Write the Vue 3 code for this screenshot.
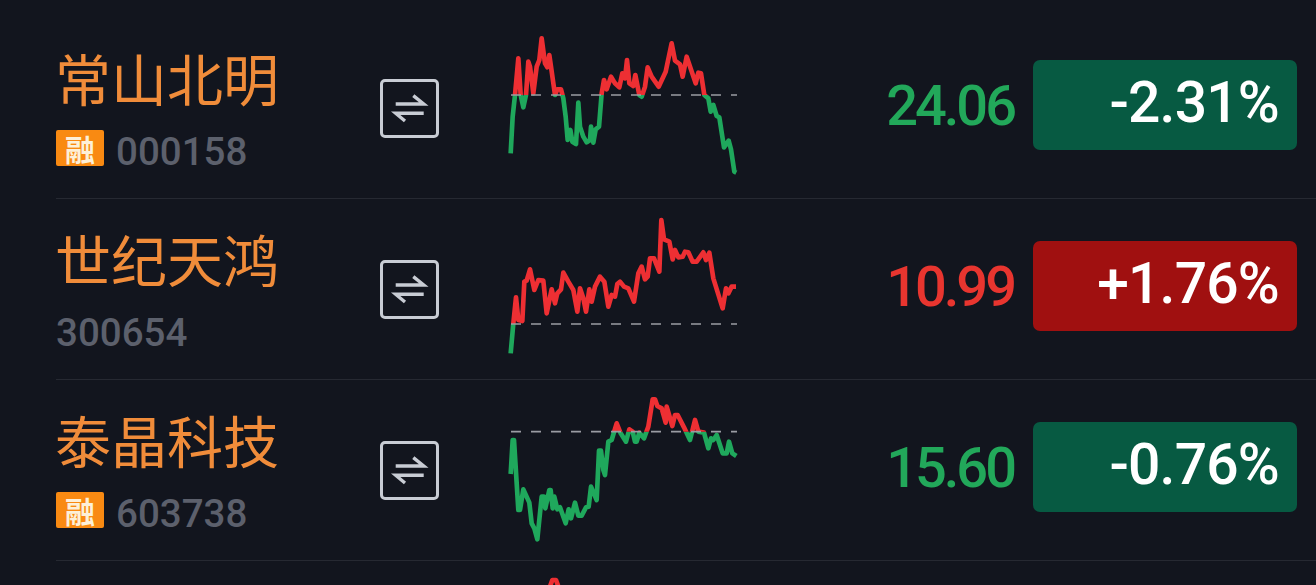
<script setup>
const rows = [
  {
    id: 'a', name: '常山北明', code: '000158', margin: true, price: '24.06', pct: '-2.31%', up: false,
    originY: -36, base: 195,
    pts: '32,370 38,260 45,195 55,85 62,195 70,232 78,195 85,95 90,110 100,190 110,110 118,90 125,25 135,100 142,112 148,75 153,110 165,195 172,178 183,178 190,205 197,260 203,330 211,300 217,335 228,342 235,218 240,290 250,320 260,337 270,330 273,290 280,338 287,298 297,290 305,190 312,150 320,178 333,140 345,160 358,172 367,130 375,145 381,90 388,160 400,168 406,135 418,195 425,200 435,170 443,112 455,140 476,170 497,125 515,40 525,92 540,103 548,140 560,80 587,160 595,128 603,130 613,195 625,205 632,245 640,225 650,258 658,262 672,352 686,332 693,358 703,425 709,428'
  },
  {
    id: 'b', name: '世纪天鸿', code: '300654', margin: false, price: '10.99', pct: '+1.76%', up: true,
    originY: -33, base: 342,
    pts: '32,430 40,340 48,262 55,330 67,333 73,215 80,212 90,178 103,240 115,210 130,212 140,310 155,238 165,280 172,250 183,238 190,188 205,215 220,240 232,305 240,235 250,265 258,305 268,238 275,275 285,230 300,200 313,215 325,290 335,255 345,260 352,222 360,215 372,230 385,235 402,275 415,190 425,170 435,208 443,200 450,145 462,145 478,185 484,30 492,88 508,95 518,148 525,120 535,142 548,140 555,125 565,127 578,155 590,155 610,127 618,150 628,128 640,205 668,295 678,235 685,250 695,230 708,230'
  },
  {
    id: 'c', name: '泰晶科技', code: '603738', margin: true, price: '15.60', pct: '-0.76%', up: false,
    originY: -30, base: 125,
    pts: '32,252 38,150 42,150 55,360 60,360 70,298 88,338 95,400 103,415 112,448 125,320 132,320 136,355 148,300 152,300 158,355 163,320 172,358 180,352 197,400 206,358 213,385 225,338 235,377 245,377 258,352 266,350 273,290 290,330 297,182 303,182 310,240 315,255 325,155 335,150 350,100 362,130 378,155 388,118 398,125 405,155 410,155 418,128 432,145 445,110 458,28 465,28 472,48 485,55 497,98 500,50 517,108 525,75 533,75 552,112 570,150 585,90 595,125 612,128 625,175 633,145 640,150 650,135 668,190 680,190 687,155 697,190 709,198'
  }
]
const tail = { id: 'd', originY: 0, base: 400, pts: '145,90 157,57 168,57 180,90' }
</script>

<template>
  <div class="list">
    <div v-for="r in rows" :key="r.id" class="row">
      <div class="info">
        <div class="name">{{ r.name }}</div>
        <div class="meta">
          <span v-if="r.margin" class="badge">融</span>
          <span class="code">{{ r.code }}</span>
        </div>
      </div>
      <button class="swap" type="button" aria-label="切换">
        <svg viewBox="0 0 53 53" width="53" height="53">
          <path d="M12.7 22H40.7L30.3 13.7" />
          <path d="M40.7 31.300H12.700L22 39" />
        </svg>
      </button>
      <svg class="chart" :viewBox="`0 ${r.originY} 750 543`" width="250" height="181">
        <defs>
          <clipPath :id="`up-${r.id}`"><rect x="0" :y="r.originY" width="750" :height="r.base - r.originY" /></clipPath>
          <clipPath :id="`down-${r.id}`"><rect x="0" :y="r.base" width="750" :height="543" /></clipPath>
        </defs>
        <polyline class="line green" :points="r.pts" :clip-path="`url(#down-${r.id})`" />
        <polyline class="line red" :points="r.pts" :clip-path="`url(#up-${r.id})`" />
        <line class="dash" x1="33" x2="711" :y1="r.base" :y2="r.base" />
      </svg>
      <div class="price" :class="r.up ? 'up' : 'down'">{{ r.price }}</div>
      <div class="pill" :class="r.up ? 'pill-up' : 'pill-down'">{{ r.pct }}</div>
    </div>
    <div class="row last">
      <svg class="chart tail" :viewBox="`0 0 750 543`" width="250" height="181">
        <polyline class="line red" :points="tail.pts" />
      </svg>
    </div>
  </div>
</template>

<style scoped>
.list {
  padding-top: 18px;
  padding-left: 56px;
  background: #12151e;
  height: 567px;
  overflow: hidden;
}
.row {
  display: grid;
  grid-template-columns: 324px 59px 61px 250px 1fr 264px;
  align-items: center;
  height: 180px;
  border-bottom: 1px solid #262932;
  padding-right: 19px;
}
.row.last { border-bottom: 0; }
.info {
  display: flex;
  flex-direction: column;
  align-self: start;
  padding-top: 21px;
}
.name {
  font-family: "Noto Sans CJK SC", sans-serif;
  font-weight: 400;
  font-size: 56px;
  line-height: 76px;
  color: #f08c3a;
  margin-left: -1px;
}
.meta {
  display: flex;
  align-items: center;
  gap: 12px;
  height: 40px;
  margin-top: 13px;
}
.badge {
  width: 48px;
  height: 36px;
  border-radius: 2px;
  background: #f98a12;
  color: #fdf0d8;
  font-family: "Noto Sans CJK SC", sans-serif;
  font-weight: 700;
  font-size: 30px;
  line-height: 36px;
  text-align: center;
}
.code {
  font-family: Roboto, sans-serif;
  font-size: 38.500px;
  font-weight: 500;
  line-height: 40px;
  color: #5c606c;
  padding-top: 8px;
}
.swap {
  grid-column: 2;
  box-sizing: border-box;
  width: 59px;
  height: 59px;
  padding: 0;
  background: transparent;
  border: 3px solid #c8ccd4;
  border-radius: 5px;
  margin-top: -1px;
}
.swap svg { display: block; }
.swap path {
  fill: none;
  stroke: #c8ccd4;
  stroke-width: 3.4;
}
.chart {
  grid-column: 4;
  align-self: start;
}
.line {
  fill: none;
  stroke-width: 14;
  stroke-linejoin: round;
}
.red { stroke: #ee2f33; }
.green { stroke: #1fa85c; }
.dash {
  stroke: #9a9ca3;
  stroke-width: 5;
  stroke-dasharray: 30 30;
}
.price {
  grid-column: 5;
  justify-self: end;
  font-family: Roboto, sans-serif;
  font-size: 56px;
  font-weight: 500;
  letter-spacing: -3px;
  padding-right: 19px;
  line-height: 60px;
  margin-top: -6px;
}
.up { color: #e8352f; }
.down { color: #22a85a; }
.pill {
  grid-column: 6;
  box-sizing: border-box;
  height: 90px;
  border-radius: 7px;
  color: #fff;
  font-family: Roboto, sans-serif;
  font-size: 57px;
  font-weight: 500;
  letter-spacing: -0.800px;
  line-height: 85px;
  text-align: right;
  padding-right: 18px;
  margin-top: -7px;
}
.pill-up { background: #a01010; }
.pill-down { background: #075a42; }
</style>

<style>
html, body { margin: 0; background: #12151e; overflow: hidden; }
</style>
